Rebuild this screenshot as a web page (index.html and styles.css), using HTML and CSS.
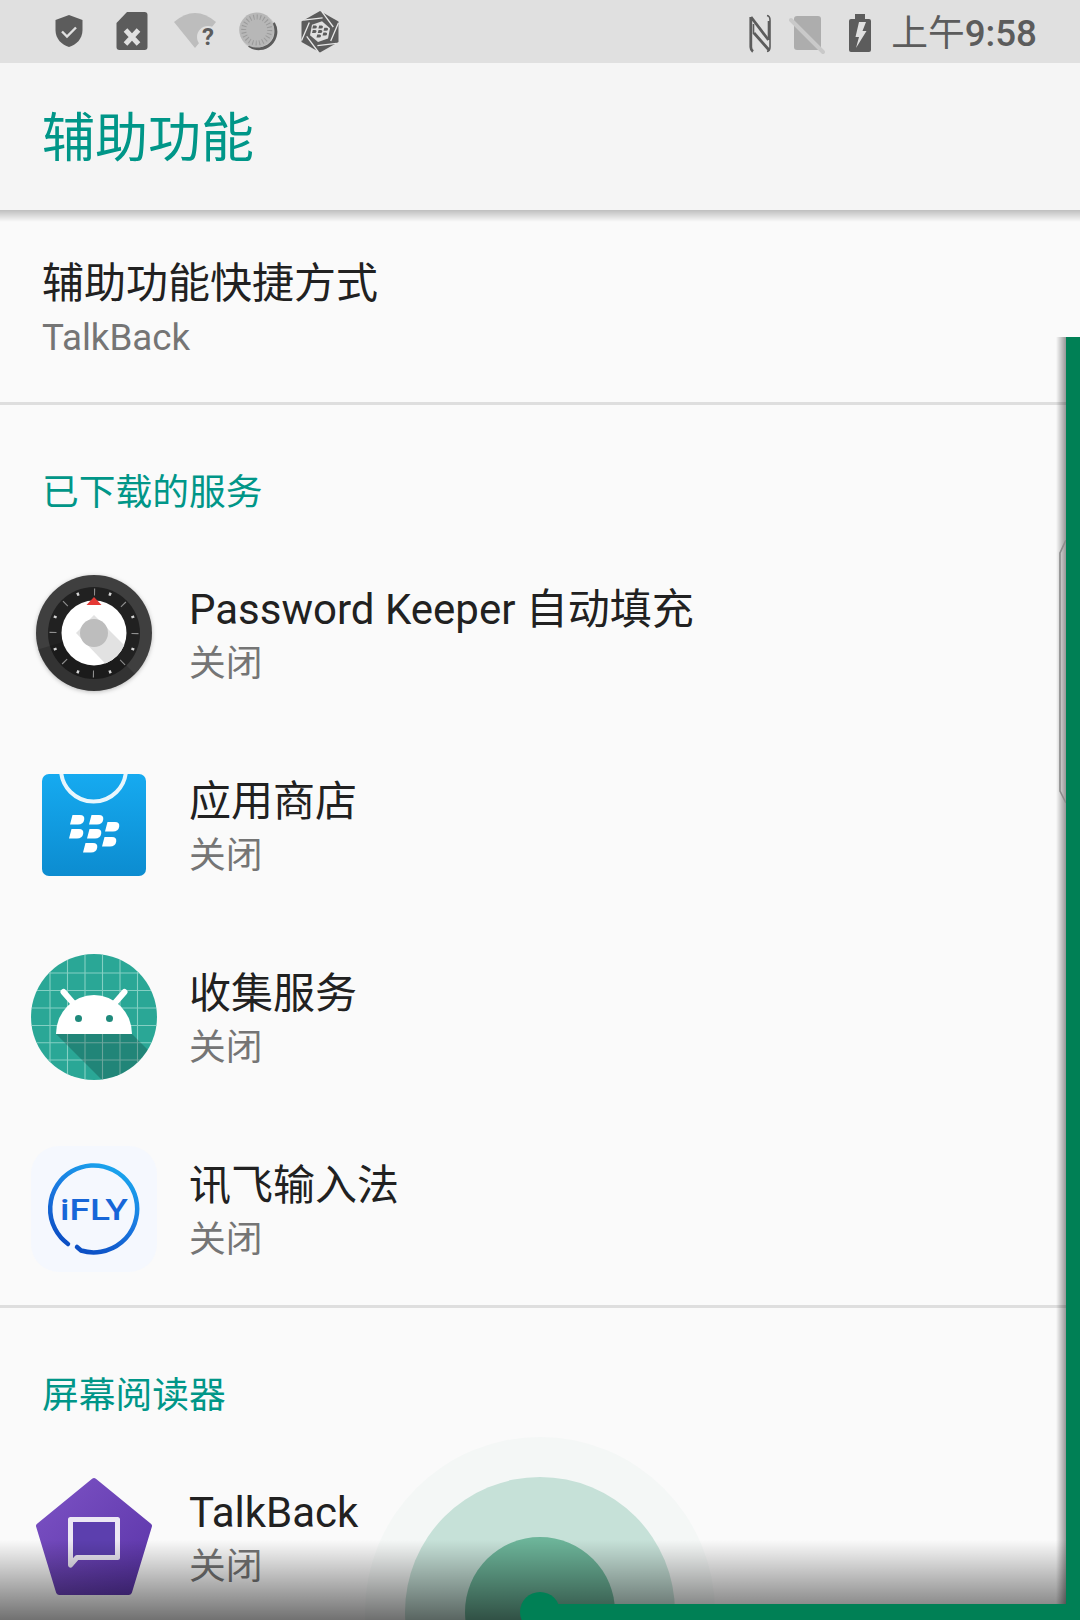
FILE: index.html
```html
<!DOCTYPE html>
<html lang="zh-CN">
<head>
<meta charset="utf-8">
<title>辅助功能</title>
<link rel="stylesheet" href="styles.css">
</head>
<body>
<svg class="defs" width="0" height="0" aria-hidden="true">
  <defs>
    <path id="bbd" d="M2.5 0H10Q15 0 14.2 4.7 13.4 9.5 8 9.5H0Z"/>
    <g id="bb">
      <use href="#bbd" x="1" y="0"/><use href="#bbd" x="20" y="0"/>
      <use href="#bbd" x="0" y="14"/><use href="#bbd" x="18" y="14"/>
      <use href="#bbd" x="36" y="7"/><use href="#bbd" x="14" y="28"/><use href="#bbd" x="33" y="22"/>
    </g>
    <clipPath id="andClip"><circle cx="63" cy="63" r="63"/></clipPath>
    <clipPath id="storeClip"><rect x="11" y="12" width="104" height="102" rx="7"/></clipPath>
    <clipPath id="pwClip"><circle cx="63" cy="63" r="32.5"/></clipPath>
    <clipPath id="pwOuter"><circle cx="63" cy="63" r="58"/></clipPath>
    <linearGradient id="storeGrad" x1="0" y1="0" x2="0" y2="1"><stop offset="0" stop-color="#16aaf0"/><stop offset="1" stop-color="#0c8cd0"/></linearGradient>
    <linearGradient id="flyGrad" x1=".8" y1="0" x2=".3" y2="1"><stop offset="0" stop-color="#1aa8ee"/><stop offset=".5" stop-color="#1a78e0"/><stop offset="1" stop-color="#0b4cc2"/></linearGradient>
    <linearGradient id="tbGrad" x1="0" y1="0" x2="1" y2="1"><stop offset="0" stop-color="#7c52c4"/><stop offset="1" stop-color="#5a34a8"/></linearGradient>
  </defs>
</svg>

<div class="screen">
  <header class="status">
    <div class="status-left">
      <svg class="si" viewBox="0 0 44 44"><path class="ic-d" d="M22 6 35.5 11V21C35.5 30 29 36 22 38 15 36 8.5 30 8.5 21V11Z"/><path class="ic-cut" d="M15 22.5l5 5 9-9"/></svg>
      <svg class="si" viewBox="0 0 44 44"><path class="ic-d" d="M17 3H34.5a3 3 0 0 1 3 3V38a3 3 0 0 1-3 3H9.5a3 3 0 0 1-3-3V14Z"/><path class="ic-cut thick" d="M15.5 21 28.5 35M28.5 21 15.5 35"/></svg>
      <svg class="si" viewBox="0 0 44 44"><path class="ic-l" d="M22 39 1 13Q22-5 43 13Z"/><circle class="ic-bg" cx="35" cy="28" r="11"/><text class="qm" x="35" y="36">?</text></svg>
      <svg class="si" viewBox="0 0 44 44"><circle class="ic-m" cx="22.5" cy="23" r="18"/><path class="ic-arc" d="M37.500 14A17 17 0 0 1 13 36.500"/><circle class="ic-l2" cx="20.700" cy="21" r="17.500"/><circle class="ic-ticks" cx="20.700" cy="21" r="13" pathLength="240" stroke-dasharray="3 7"/></svg>
      <svg class="si" viewBox="0 0 44 44"><path class="ic-d" d="M21 2 39.500 12.500V33L21 43.500 2.500 33V12.500Z"/><path class="ic-bg" d="M31 19.200 29 29.600 19 33.100 11 26.200 13 15.800 23 12.300Z"/><path class="ic-lines" d="M22.700 2.400 34.300 18M39.400 14 31.700 31.900M37.700 34.300 18.400 36.600M19.300 43 7.700 27.400M2.600 31.400 10.300 13.500M4.300 11.100 23.600 8.800"/><use class="ic-d" href="#bb" transform="translate(13 16.500) scale(.32)"/></svg>
    </div>
    <div class="status-right">
      <svg class="si-n" viewBox="0 0 30 44"><path class="ic-thick" d="M9.800 6V36Q9.800 39 12 40.500M10 6 27.500 29M13 22 28 39"/><path class="ic-thin" d="M26 4.500Q29 5 29 9V36Q29 40 26 40.500M27.500 29V10M12.500 13V23"/></svg>
      <svg class="si-o" viewBox="0 0 36 44"><path class="ic-l3" d="M5 8a3 3 0 0 1 3-3H29a3 3 0 0 1 3 3V36a3 3 0 0 1-3 3H8a3 3 0 0 1-3-3Z"/><path class="ic-slash" d="M2 9 34 41"/></svg>
      <svg class="si-b" viewBox="0 0 30 44"><path class="ic-d" d="M12 3H22V8H26a2 2 0 0 1 2 2V39a2 2 0 0 1-2 2H8a2 2 0 0 1-2-2V10a2 2 0 0 1 2-2H12Z"/><path class="ic-bg" d="M16 11H23L19.500 20H23.500L13 37 16 26H12.500Z"/></svg>
      <span class="clock"><span class="clock-cjk">上午</span>9:58</span>
    </div>
  </header>

  <div class="appbar"><h1 class="appbar-title">辅助功能</h1></div>

  <main class="list">
    <div class="item item-plain">
      <div class="item-title">辅助功能快捷方式</div>
      <div class="item-sub">TalkBack</div>
    </div>
    <hr class="divider">
    <h2 class="section">已下载的服务</h2>

    <div class="item">
      <svg class="app-icon app-icon-soft" viewBox="0 0 126 126">
        <circle cx="63" cy="63" r="58" fill="#3f3f3f"/>
        <circle cx="63" cy="63" r="46" fill="#212121"/>
        <path d="M63 63 130 130H40L5 80Z" fill="#000" opacity=".18" clip-path="url(#pwOuter)"/>
        <circle cx="63" cy="63" r="41" fill="none" stroke="#8e8e8e" stroke-width="7" pathLength="160" stroke-dasharray=".7 19.3"/>
        <circle cx="63" cy="63" r="42" fill="none" stroke="#d5d5d5" stroke-width="3" pathLength="160" stroke-dasharray="1.5 18.5" stroke-dashoffset="-9.250"/>
        <circle cx="63" cy="63" r="32.500" fill="#fff"/>
        <path d="M63 45 110 92 90 110 45 63Z" fill="#e2e2e2" clip-path="url(#pwClip)"/>
        <path d="M55.500 35 63 27 70.500 35Z" fill="#e53935"/>
        <circle cx="63" cy="63" r="14" fill="#bdbdbd"/>
      </svg>
      <div class="item-text">
        <div class="item-title">Password Keeper 自动填充</div>
        <div class="item-sub">关闭</div>
      </div>
    </div>

    <div class="item">
      <svg class="app-icon" viewBox="0 0 126 126">
        <rect x="11" y="12" width="104" height="102" rx="7" fill="url(#storeGrad)"/>
        <circle cx="62.500" cy="7" r="32.500" fill="none" stroke="#e8f6fd" stroke-width="4" clip-path="url(#storeClip)"/>
        <use href="#bb" fill="#fff" transform="translate(38 53)"/>
      </svg>
      <div class="item-text">
        <div class="item-title">应用商店</div>
        <div class="item-sub">关闭</div>
      </div>
    </div>

    <div class="item">
      <svg class="app-icon" viewBox="0 0 126 126">
        <g clip-path="url(#andClip)">
          <rect width="126" height="126" fill="#2aa796"/>
          <path d="M19 0V126M36.500 0V126M54 0V126M71.500 0V126M89 0V126M106.500 0V126M0 19H126M0 36.500H126M0 54H126M0 71.500H126M0 88.700H126M0 106H126" stroke="#84cfc3" stroke-width="1.100" fill="none"/>
          <path d="M25 80H101L126 105V126H71Z" fill="#000" opacity=".2"/>
        </g>
        <path d="M32.500 38 43 50M93.500 38 83 50" stroke="#fff" stroke-width="6" stroke-linecap="round"/>
        <path d="M25 80A38 39 0 0 1 101 80Z" fill="#fff"/>
        <circle cx="47.500" cy="64.500" r="3.500" fill="#1f8a7c"/><circle cx="78.500" cy="64.500" r="3.500" fill="#1f8a7c"/>
      </svg>
      <div class="item-text">
        <div class="item-title">收集服务</div>
        <div class="item-sub">关闭</div>
      </div>
    </div>

    <div class="item">
      <svg class="app-icon" viewBox="0 0 126 126">
        <rect width="126" height="126" rx="28" fill="#f5f8fe"/>
        <path d="M37 98A43.500 43.500 0 1 1 50 104.500L46 101" fill="none" stroke="url(#flyGrad)" stroke-width="4.500" stroke-linecap="round"/>
        <text class="fly" x="29" y="74" textLength="68" lengthAdjust="spacingAndGlyphs">iFLY</text>
      </svg>
      <div class="item-text">
        <div class="item-title">讯飞输入法</div>
        <div class="item-sub">关闭</div>
      </div>
    </div>

    <hr class="divider">
    <h2 class="section">屏幕阅读器</h2>

    <div class="item">
      <svg class="app-icon" viewBox="0 0 126 126">
        <path d="M63 8 118 53 98 119H28L8 53Z" fill="url(#tbGrad)" stroke="url(#tbGrad)" stroke-width="6" stroke-linejoin="round"/>
        <path d="M39.500 46.500H86.500V84.500H46L39.500 92Z" fill="#5c3fae" stroke="#ece8f4" stroke-width="5" stroke-linejoin="round"/>
      </svg>
      <div class="item-text">
        <div class="item-title">TalkBack</div>
        <div class="item-sub">关闭</div>
      </div>
    </div>
  </main>

  <div class="ripple ripple-1"></div>
  <div class="ripple ripple-2"></div>
  <div class="ripple ripple-3"></div>
  <div class="bottom-fade"></div>
  <div class="side-shadow"></div>
  <svg class="notch" viewBox="0 0 8 264"><path d="M7 0 1 13V251L7 263" fill="none" stroke="#8b8b8b" stroke-width="1.600"/></svg>
  <div class="dot"></div>
  <div class="bar-bottom"></div>
  <div class="bar-right"></div>
</div>
</body>
</html>
```

FILE: styles.css
```css
* { box-sizing: border-box; }
html, body { margin: 0; padding: 0; }
body {
  width: 1080px;
  height: 1620px;
  overflow: hidden;
  background: #fafafa;
  font-family: Roboto, "Noto Sans CJK SC", sans-serif;
}
.defs { position: absolute; }
.screen { position: relative; width: 1080px; height: 1620px; overflow: hidden; background: #fafafa; }

/* status bar */
.status {
  height: 63px;
  background: #e0e0e0;
  display: flex;
  align-items: flex-start;
  justify-content: space-between;
  padding: 9px 43px 0 47px;
}
.status-left { display: flex; align-items: center; gap: 19px; }
.status-right { display: flex; align-items: center; gap: 18px; }
.si { width: 44px; height: 44px; display: block; }
.si-n { width: 30px; height: 44px; display: block; }
.si-o { width: 36px; height: 44px; display: block; }
.si-b { width: 30px; height: 44px; display: block; }
.ic-d { fill: #5c5c5c; }
.ic-l { fill: #bdbdbd; }
.ic-l2 { fill: #b7b7b7; }
.ic-l3 { fill: #adadad; }
.ic-m { fill: #c9c9c9; }
.ic-bg { fill: #e0e0e0; }
.ic-arc { fill: none; stroke: #5c5c5c; stroke-width: 3; }
.ic-ticks { fill: none; stroke: #9b9b9b; stroke-width: 5; }
.ic-cut { fill: none; stroke: #e0e0e0; stroke-width: 2.4; }
.ic-cut.thick { stroke-width: 5; }
.ic-lines { fill: none; stroke: #e8e8e8; stroke-width: 1.3; }
.ic-thin { fill: none; stroke: #5c5c5c; stroke-width: 1.6; }
.ic-thick { fill: none; stroke: #5c5c5c; stroke-width: 2.8; }
.ic-slash { fill: none; stroke: #c9c9c9; stroke-width: 4; stroke-linecap: round; }
.qm { font-family: Roboto, sans-serif; font-weight: 700; font-size: 24px; fill: #5c5c5c; text-anchor: middle; }
.clock { font-size: 36.75px; font-weight: 500; color: #5c5c5c; line-height: 44px; white-space: nowrap; padding-top: 3px; }
.clock-cjk { font-weight: 400; }

/* app bar */
.appbar {
  position: relative;
  z-index: 1;
  height: 147px;
  background: #f5f5f5;
  display: flex;
  align-items: center;
  padding: 4px 0 0 42px;
}
.appbar::after {
  content: "";
  position: absolute;
  left: 0;
  right: 0;
  top: 100%;
  height: 12px;
  background: linear-gradient(to bottom, rgba(0, 0, 0, .24), rgba(0, 0, 0, 0));
}
.appbar-title { margin: 0; font-size: 53px; font-weight: 400; line-height: 70px; color: #009688; }

/* list */
.list { display: block; }
.item { display: flex; align-items: center; height: 192px; padding-left: 31px; gap: 32px; }
.item-plain { display: block; padding: 44px 0 0 42px; }
.item-plain .item-title { line-height: 59px; }
.app-icon { width: 126px; height: 126px; flex: none; display: block; }
.app-icon-soft { filter: drop-shadow(0 1px 2px rgba(0, 0, 0, .25)); }
.item-text { display: block; padding-top: 4px; }
.item-title { font-size: 42px; line-height: 58px; color: #212121; white-space: nowrap; }
.item-sub { font-size: 36.75px; line-height: 50px; color: #757575; white-space: nowrap; }
.divider { margin: 0; border: 0; height: 3px; background: #dedede; }
.section { margin: 0; height: 132px; padding: 64px 0 0 42px; font-size: 36.75px; line-height: 48px; font-weight: 400; color: #009688; }
.fly { font-family: Roboto, sans-serif; font-weight: 500; font-size: 30px; fill: #1766d8; }

/* overlays */
.ripple { position: absolute; border-radius: 50%; }
.ripple-1 { left: 365px; top: 1437px; width: 350px; height: 350px; background: #f4f7f6; }
.ripple-2 { left: 405px; top: 1477px; width: 270px; height: 270px; background: #c6e1d8; }
.ripple-3 { left: 465px; top: 1537px; width: 150px; height: 150px; background: #6cb499; }
.bottom-fade {
  position: absolute;
  left: 0;
  right: 0;
  top: 1540px;
  height: 80px;
  background: linear-gradient(to bottom, rgba(0,0,0,0), rgba(0,0,0,.55));
}
.side-shadow {
  position: absolute;
  left: 1056px;
  width: 10px;
  top: 337px;
  height: 1267px;
  background: linear-gradient(to right, rgba(0,0,0,0), rgba(0,0,0,.4));
}
.notch { position: absolute; left: 1059px; top: 540px; width: 8px; height: 264px; }
.dot { position: absolute; left: 520px; top: 1592px; width: 40px; height: 40px; border-radius: 50%; background: #008055; }
.bar-bottom { position: absolute; left: 558px; right: 0; top: 1604px; height: 16px; background: #008055; }
.bar-right { position: absolute; left: 1066px; right: 0; top: 337px; bottom: 0; background: #008055; }
```
